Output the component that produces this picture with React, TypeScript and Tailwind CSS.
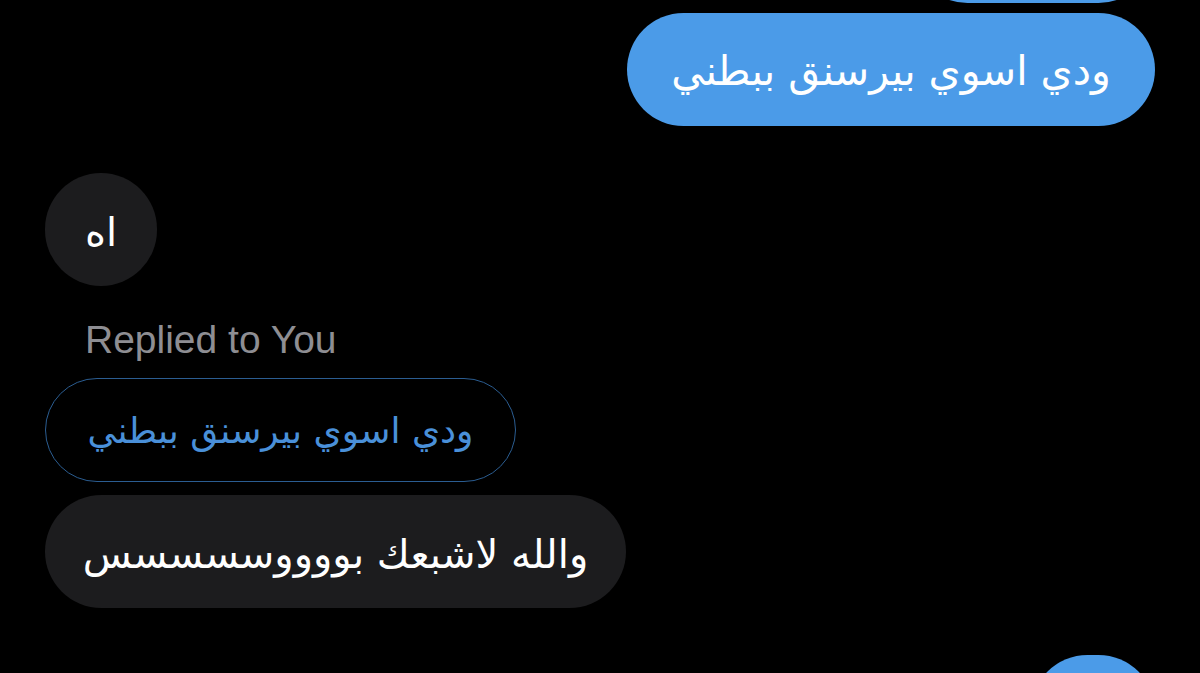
import React from 'react';

const arabic = { fontFamily: '"DejaVu Sans", "Noto Sans", sans-serif' };

const Outgoing: React.FC<{ text?: string; className?: string }> = ({ text, className }) => (
  <div className="flex justify-end">
    <div
      dir="rtl"
      className={`h-[113px] rounded-full bg-[#4b9be8] text-white flex items-center justify-center text-[41px] pt-[4px] ${className ?? ''}`}
      style={arabic}
    >
      {text}
    </div>
  </div>
);

export default function App() {
  return (
    <div className="w-[1200px] h-[673px] overflow-hidden bg-black">
      <div className="flex flex-col px-[45px] -mt-[110px]">
        {/* earlier message, scrolled off */}
        <Outgoing className="w-[244px]" />

        <div className="mt-[10px]">
          <Outgoing text="ودي اسوي بيرسنق ببطني" className="w-[528px]" />
        </div>

        {/* incoming short */}
        <div className="mt-[47px] flex">
          <div
            dir="rtl"
            className="w-[112px] h-[113px] rounded-full bg-[#1c1c1e] text-white flex items-center justify-center text-[40px] pt-[4px]"
            style={arabic}
          >
            اه
          </div>
        </div>

        {/* reply block */}
        <div className="mt-[29px] flex flex-col items-start">
          <div className="pl-[40px] text-[39px] leading-[50px] text-[#8e8e93]" style={{ fontFamily: '"Liberation Sans", Arial, sans-serif' }}>
            Replied to You
          </div>
          <div
            dir="rtl"
            className="mt-[13px] w-[471px] h-[104px] rounded-full border-[1.5px] border-[#2b5d91] text-[#4a90d9] flex items-center justify-center text-[36px] pt-[2px]"
            style={arabic}
          >
            ودي اسوي بيرسنق ببطني
          </div>
          <div
            dir="rtl"
            className="mt-[13px] w-[581px] h-[113px] rounded-full bg-[#1c1c1e] text-white flex items-center justify-center text-[40px] pt-[4px]"
            style={arabic}
          >
            والله لاشبعك بووووسسسسس
          </div>
        </div>

        <div className="mt-[47px]">
          <Outgoing className="w-[124px]" />
        </div>
      </div>
    </div>
  );
}
